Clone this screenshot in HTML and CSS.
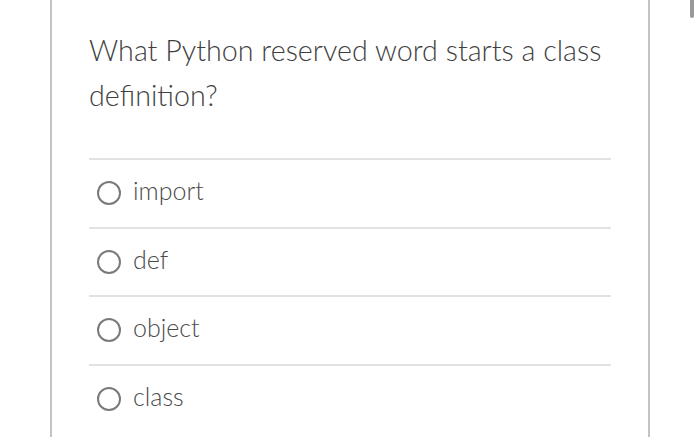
FILE: index.html
```html
<!DOCTYPE html>
<html>
<head>
<meta charset="utf-8">
<link rel="stylesheet" href="styles.css">
</head>
<body>
<div class="page">
  <div class="card">
    <div class="question">What Python reserved word starts a class definition?</div>
    <ul class="options">
      <li class="option"><span class="radio"></span><span class="label">import</span></li>
      <li class="option"><span class="radio"></span><span class="label">def</span></li>
      <li class="option"><span class="radio"></span><span class="label">object</span></li>
      <li class="option"><span class="radio"></span><span class="label">class</span></li>
    </ul>
  </div>
  <div class="scrollbar"></div>
</div>
</body>
</html>
```
FILE: styles.css
```css
html, body {
  margin: 0;
  padding: 0;
  background: #fff;
  height: 100%;
  overflow: hidden;
}
.page {
  position: relative;
  height: 437px;
  font-family: Lato, "Open Sans", sans-serif;
  font-weight: 300;
  color: #555;
}
.card {
  margin-left: 50px;
  width: 600px;
  height: 437px;
  border-left: 2px solid #c4c4c4;
  border-right: 2px solid #c4c4c4;
  padding: 28px 37px 0 37px;
  box-sizing: border-box;
}
.question {
  font-size: 28.7px;
  line-height: 45px;
  color: #3f3f3f;
  padding-bottom: 40px;
  border-bottom: 2px solid #e2e2e2;
}
.options {
  list-style: none;
  margin: 0;
  padding: 0;
}
.option {
  display: flex;
  align-items: center;
  height: 66.5px;
  border-bottom: 2px solid #e2e2e2;
}
.option:last-child {
  border-bottom: none;
}
.radio {
  width: 24px;
  height: 24px;
  border: 2.5px solid #7a7a7a;
  border-radius: 50%;
  box-sizing: border-box;
  margin-left: 8px;
  margin-right: 12px;
}
.label {
  font-size: 25px;
  color: #4a4a4a;
  position: relative;
  top: -3px;
}
.scrollbar {
  position: absolute;
  left: 690px;
  top: 0;
  width: 4px;
  height: 18px;
  border-radius: 0 0 2px 2px;
  background: #999;
}
```
